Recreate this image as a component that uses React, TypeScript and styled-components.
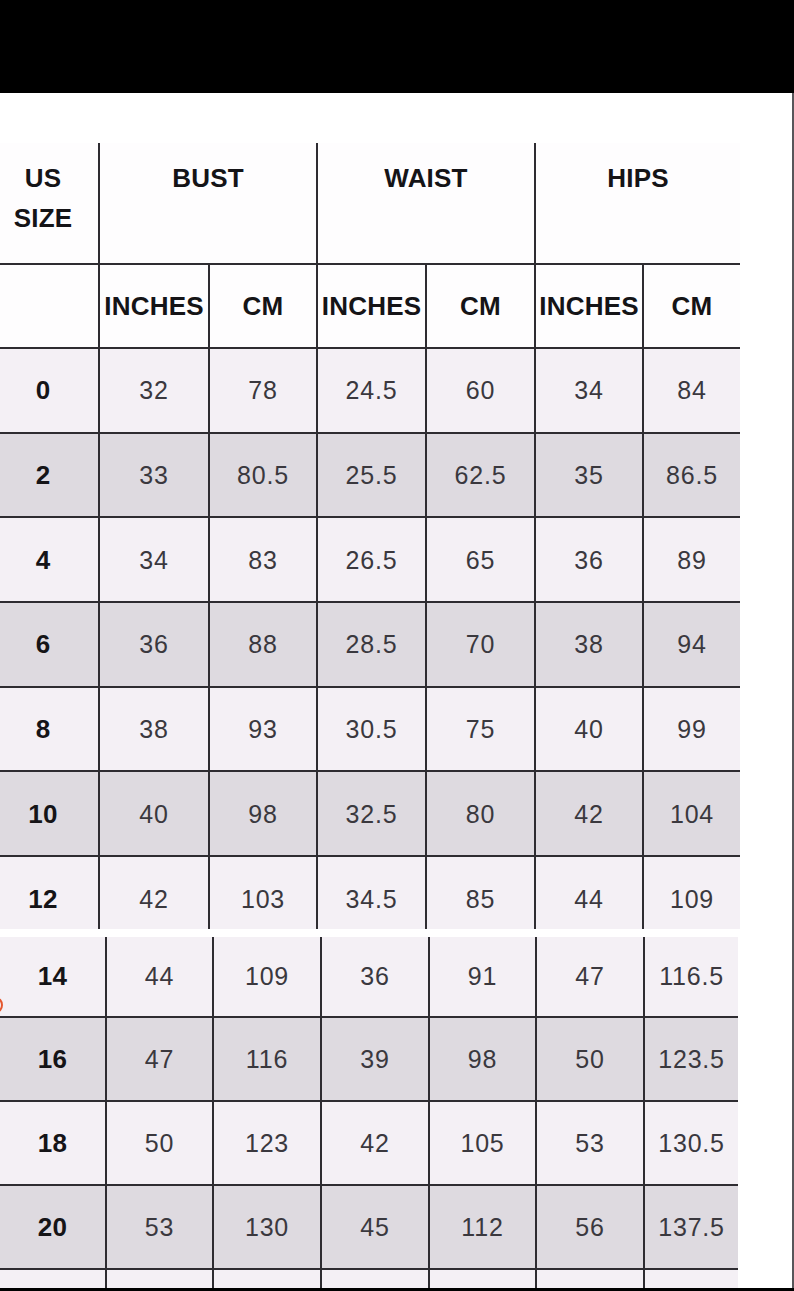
import React from "react";
import styled, {createGlobalStyle} from "styled-components";

const GlobalStyle = createGlobalStyle`
  html, body {
    margin: 0;
    padding: 0;
    background: #000;
    overflow: hidden;
  }
  * {
    box-sizing: border-box;
  }
`

const LINE = '#2e2c31'
const LIGHT = '#f4f0f5'
const GRAY = '#dedae0'

const Page = styled.div`
  width: 794px;
  height: 1291px;
  display: flex;
  flex-direction: column;
  background: #000;
  font-family: "Liberation Sans", Arial, sans-serif;
`
const TopBar = styled.div`
  height: 93px;
  flex-shrink: 0;
  background: #000;
`
const BottomBar = styled.div`
  height: 3px;
  flex-shrink: 0;
  background: #000;
`
const Sheet = styled.div`
  flex: 1;
  display: flex;
  flex-direction: column;
  align-items: flex-start;
  gap: 8px;
  padding-top: 50px;
  background: #fff;
  border-right: 2px solid #58565a;
  overflow: hidden;
`
const Table = styled.div<{$shift: number}>`
  position: relative;
  display: flex;
  flex-direction: column;
  align-items: flex-start;
  margin-left: ${props => props.$shift}px;
`
const Row = styled.div<{$cols: string, $h: number, $bg: string, $line?: boolean}>`
  display: grid;
  grid-template-columns: ${props => props.$cols};
  width: max-content;
  height: ${props => props.$h}px;
  background: ${props => props.$bg};
  border-bottom: ${props => props.$line ? `2px solid ${LINE}` : 'none'};
  overflow: hidden;
`
const Cell = styled.div<{$span?: number, $bold?: boolean, $top?: boolean, $inner?: number}>`
  grid-column: span ${props => props.$span || 1};
  display: flex;
  justify-content: center;
  align-items: ${props => props.$top ? 'flex-start' : 'center'};
  padding-top: ${props => props.$top ? '15px' : '0'};
  height: ${props => props.$inner ? props.$inner + 'px' : 'auto'};
  text-align: center;
  font-size: ${props => props.$bold ? '26px' : '25px'};
  line-height: 40px;
  font-weight: ${props => props.$bold ? 700 : 400};
  letter-spacing: ${props => props.$bold ? '0.2px' : '0.8px'};
  color: ${props => props.$bold ? '#151417' : '#3a383e'};
  &:not(:first-child) {
    border-left: 2px solid ${LINE};
  }
`
const RedMark = styled.span`
  position: absolute;
  left: -11px;
  top: 60px;
  width: 14px;
  height: 16px;
  border: 2px solid #e4572e;
  border-radius: 50%;
`

const TOP_COLS = '110px 110px 108px 109px 109px 108px 98px'
const LOW_COLS = '105px 107px 108px 108px 107px 108px 95px'

const topRows = [
  ['0', '32', '78', '24.5', '60', '34', '84'],
  ['2', '33', '80.5', '25.5', '62.5', '35', '86.5'],
  ['4', '34', '83', '26.5', '65', '36', '89'],
  ['6', '36', '88', '28.5', '70', '38', '94'],
  ['8', '38', '93', '30.5', '75', '40', '99'],
  ['10', '40', '98', '32.5', '80', '42', '104'],
]

const lowRows = [
  {cells: ['14', '44', '109', '36', '91', '47', '116.5'], h: 81},
  {cells: ['16', '47', '116', '39', '98', '50', '123.5'], h: 84},
  {cells: ['18', '50', '123', '42', '105', '53', '130.5'], h: 84},
  {cells: ['20', '53', '130', '45', '112', '56', '137.5'], h: 84},
]

const DataRow = (props: {cols: string, h: number, cells: string[], bg: string, line?: boolean, inner?: number}) => (
  <Row $cols={props.cols} $h={props.h} $bg={props.bg} $line={props.line}>
    {props.cells.map((c, i) => (
      <Cell key={i} $bold={i === 0} $inner={props.inner}>{c}</Cell>
    ))}
  </Row>
)

const App = () => {
  return (
    <Page>
      <GlobalStyle/>
      <TopBar/>
      <Sheet>
        <Table $shift={-12}>
          <Row $cols={TOP_COLS} $h={122} $bg={'#fefdfe'} $line>
            <Cell $bold $top>US<br/>SIZE</Cell>
            <Cell $bold $top $span={2}>BUST</Cell>
            <Cell $bold $top $span={2}>WAIST</Cell>
            <Cell $bold $top $span={2}>HIPS</Cell>
          </Row>
          <Row $cols={TOP_COLS} $h={84} $bg={'#fefdfe'} $line>
            <Cell/>
            <Cell $bold>INCHES</Cell>
            <Cell $bold>CM</Cell>
            <Cell $bold>INCHES</Cell>
            <Cell $bold>CM</Cell>
            <Cell $bold>INCHES</Cell>
            <Cell $bold>CM</Cell>
          </Row>
          {topRows.map((cells, i) => (
            <DataRow key={cells[0]} cols={TOP_COLS} h={84.67} cells={cells} bg={i % 2 ? GRAY : LIGHT} line/>
          ))}
          <DataRow cols={TOP_COLS} h={72} inner={84} cells={['12', '42', '103', '34.5', '85', '44', '109']} bg={LIGHT}/>
        </Table>
        <Table $shift={0}>
          {lowRows.map((r, i) => (
            <DataRow key={r.cells[0]} cols={LOW_COLS} h={r.h} cells={r.cells} bg={i % 2 ? GRAY : LIGHT} line/>
          ))}
          <DataRow cols={LOW_COLS} h={19} cells={['', '', '', '', '', '', '']} bg={LIGHT}/>
          <RedMark/>
        </Table>
      </Sheet>
      <BottomBar/>
    </Page>
  )
}

export default App
